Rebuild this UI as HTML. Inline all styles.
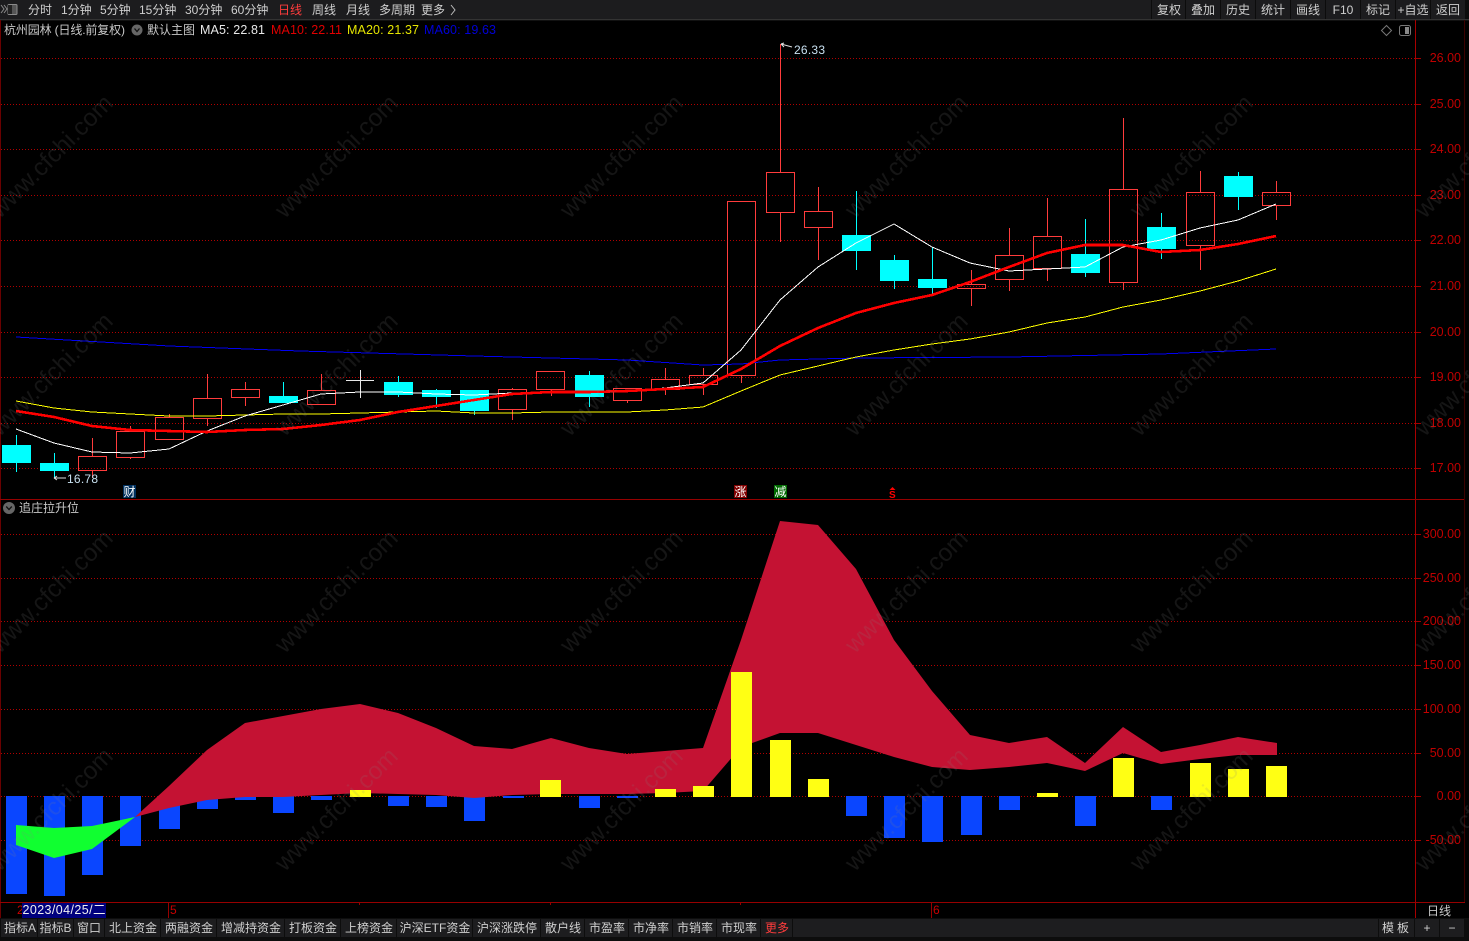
<!DOCTYPE html>
<html lang="zh"><head><meta charset="utf-8"><title>杭州园林</title>
<style>
html,body{margin:0;padding:0;background:#000;width:1469px;height:941px;overflow:hidden}
svg{display:block;position:absolute;left:0;top:0;font-family:"Liberation Sans","Noto Sans CJK SC",sans-serif;font-size:12px}
.c{shape-rendering:crispEdges}
.tb{fill:#cfcfcf}
.ax{fill:#c00000;font-size:12.5px;text-anchor:end}
.wm{font-size:24.5px;fill:#808080;fill-opacity:.16;text-anchor:middle}
.m{text-anchor:middle}
</style></head><body>
<svg width="1469" height="941" viewBox="0 0 1469 941">
<rect width="1469" height="941" fill="#000"/>
<!-- top bar -->
<rect width="1469" height="19" fill="#1c1c1e"/>
<rect y="19" width="1469" height="1" fill="#333"/>
<rect y="20" width="1469" height="1" fill="#111"/>
<g fill="#0c0c0c" class="c"><rect x="1151" width="1" height="19"/><rect x="1185" width="1" height="19"/><rect x="1220" width="1" height="19"/><rect x="1255" width="1" height="19"/><rect x="1290" width="1" height="19"/><rect x="1325" width="1" height="19"/><rect x="1360" width="1" height="19"/><rect x="1395" width="1" height="19"/><rect x="1430" width="1" height="19"/><rect x="1465" width="4" height="19"/></g>
<path d="M1 5l3 4-3 4M4 5l3 4-3 4" fill="none" stroke="#8a8a8a"/>
<rect x="8" y="4.500" width="9" height="10" rx="1" fill="#555" stroke="#8a8a8a"/>
<rect x="8" y="5" width="4" height="9" fill="#222"/>
<g class="tb">
<text x="28" y="14">分时</text><text x="61" y="14">1分钟</text><text x="100" y="14">5分钟</text><text x="139" y="14">15分钟</text><text x="185" y="14">30分钟</text><text x="231" y="14">60分钟</text><text x="278" y="14" fill="#ff3c3c">日线</text><text x="312" y="14">周线</text><text x="346" y="14">月线</text><text x="379" y="14">多周期</text><text x="421" y="14">更多</text>
</g>
<path d="M451 5l4 5-4 5" fill="none" stroke="#bbb"/>
<g class="tb m">
<text x="1169" y="14">复权</text><text x="1203" y="14">叠加</text><text x="1238" y="14">历史</text><text x="1273" y="14">统计</text><text x="1308" y="14">画线</text><text x="1343" y="14">F10</text><text x="1378" y="14">标记</text><text x="1413" y="14">+自选</text><text x="1448" y="14">返回</text>
</g>
<!-- legend -->
<text x="4" y="34" fill="#c8c8c8" textLength="121" lengthAdjust="spacing">杭州园林 (日线.前复权)</text>
<circle cx="137" cy="30" r="5.500" fill="#666"/><path d="M134.500 28.500l2.500 3 2.500-3" fill="none" stroke="#111" stroke-width="1.300"/>
<text x="147" y="34" fill="#c8c8c8">默认主图</text>
<text x="200" y="34" fill="#e8e8e8" font-size="12.500" textLength="65" lengthAdjust="spacing">MA5: 22.81</text>
<text x="271" y="34" fill="#e00000" font-size="12.500" textLength="71" lengthAdjust="spacing">MA10: 22.11</text>
<text x="347" y="34" fill="#e6e600" font-size="12.500" textLength="72" lengthAdjust="spacing">MA20: 21.37</text>
<text x="424" y="34" fill="#0000d8" font-size="12.500" textLength="72" lengthAdjust="spacing">MA60: 19.63</text>
<path d="M1386.500 25.500l5 5-5 5-5-5z" fill="none" stroke="#777"/>
<rect x="1399.500" y="25.500" width="11" height="10" rx="2" fill="none" stroke="#777"/><rect x="1405" y="27" width="4" height="7" fill="#888"/>
<!-- frame -->
<g class="c" fill="#960000">
<rect x="0" y="20" width="1" height="898" fill="#6a0000"/>
<rect x="1415" y="20" width="1" height="898" fill="#a80000"/>
<rect x="0" y="499" width="1465" height="1"/>
<rect x="0" y="902" width="1465" height="1"/>
<rect x="1464" y="20" width="1" height="882" fill="#3a0000"/>
<rect x="359" y="902" width="1" height="3"/><rect x="550" y="902" width="1" height="3"/><rect x="740" y="902" width="1" height="3"/>
<rect x="168" y="903" width="1" height="15"/><rect x="931" y="903" width="1" height="15"/>
</g>
<!-- grid -->
<g stroke="#b00000" stroke-dasharray="1 2" class="c" fill="none">
<path d="M1 58.500H1415M1 104.500H1415M1 149.500H1415M1 195.500H1415M1 240.500H1415M1 286.500H1415M1 332.500H1415M1 377.500H1415M1 423.500H1415M1 468.500H1415"/>
<path d="M1 534.500H1415M1 578.500H1415M1 621.500H1415M1 665.500H1415M1 709.500H1415M1 753.500H1415M1 796.500H1415M1 840.500H1415"/>
</g>
<path class="c" stroke="#a00000" fill="none" d="M1416 58.500h5M1416 104.500h5M1416 149.500h5M1416 195.500h5M1416 240.500h5M1416 286.500h5M1416 332.500h5M1416 377.500h5M1416 423.500h5M1416 468.500h5M1416 534.500h5M1416 578.500h5M1416 621.500h5M1416 665.500h5M1416 709.500h5M1416 753.500h5M1416 796.500h5M1416 840.500h5"/>
<g class="ax">
<text x="1461" y="62">26.00</text><text x="1461" y="108">25.00</text><text x="1461" y="153">24.00</text><text x="1461" y="199">23.00</text><text x="1461" y="244">22.00</text><text x="1461" y="290">21.00</text><text x="1461" y="336">20.00</text><text x="1461" y="381">19.00</text><text x="1461" y="427">18.00</text><text x="1461" y="472">17.00</text>
<text x="1461" y="538">300.00</text><text x="1461" y="582">250.00</text><text x="1461" y="625">200.00</text><text x="1461" y="669">150.00</text><text x="1461" y="713">100.00</text><text x="1461" y="757">50.00</text><text x="1461" y="800">0.00</text><text x="1461" y="844">-50.00</text>
</g>
<!-- hollow red candles -->
<path class="c" fill="none" stroke="#ff3c3c" d="
M92.500 438V456M92.500 470V478M78.500 456.500H106.500V470.500H78.500Z
M130.500 426V431M130.500 457V459M116.500 431.500H144.500V457.500H116.500Z
M169.500 414V417M155.500 417.500H183.500V439.500H155.500Z
M207.500 374V398M207.500 419V426M193.500 398.500H221.500V418.500H193.500Z
M245.500 382V389M245.500 398V406M231.500 389.500H259.500V397.500H231.500Z
M321.500 374V390M307.500 390.500H335.500V404.500H307.500Z
M512.500 388V389M512.500 409V420M498.500 389.500H526.500V409.500H498.500Z
M551.500 389V396M536.500 371.500H564.500V389.500H536.500Z
M627.500 400V403M613.500 388.500H641.500V400.500H613.500Z
M665.500 368V379M665.500 389V395M651.500 379.500H679.500V389.500H651.500Z
M703.500 368V375M703.500 384V395M689.500 375.500H717.500V384.500H689.500Z
M741.500 375V383M727.500 201.500H755.500V375.500H727.500Z
M780.500 44V172M780.500 212V242M766.500 172.500H794.500V212.500H766.500Z
M818.500 187V211M818.500 227V260M804.500 211.500H832.500V227.500H804.500Z
M971.500 270V284M971.500 288V306M957.500 284.500H985.500V288.500H957.500Z
M1009.500 228V255M1009.500 279V291M995.500 255.500H1023.500V279.500H995.500Z
M1047.500 198V236M1047.500 268V281M1033.500 236.500H1061.500V268.500H1033.500Z
M1123.500 118V189M1123.500 282V290M1109.500 189.500H1137.500V282.500H1109.500Z
M1200.500 171V192M1200.500 245V270M1186.500 192.500H1214.500V245.500H1186.500Z
M1276.500 181V192M1276.500 205V220M1262.500 192.500H1290.500V205.500H1262.500Z"/>
<!-- cyan candles -->
<path class="c" fill="none" stroke="#00ffff" d="M16.500 435V472M54.500 453V478M283.500 382V403M398.500 376V397M436.500 389V408M474.500 390V415M589.500 371V407M856.500 191V270M894.500 255V289M932.500 247V295M1085.500 219V277M1161.500 213V259M1238.500 172V210"/>
<g class="c" fill="#00ffff">
<rect x="2" y="445" width="29" height="18"/><rect x="40" y="463" width="29" height="8"/><rect x="269" y="396" width="29" height="7"/><rect x="384" y="382" width="29" height="13"/><rect x="422" y="390" width="29" height="7"/><rect x="460" y="390" width="29" height="21"/><rect x="575" y="375" width="29" height="22"/><rect x="842" y="235" width="29" height="16"/><rect x="880" y="260" width="29" height="21"/><rect x="918" y="279" width="29" height="9"/><rect x="1071" y="254" width="29" height="19"/><rect x="1147" y="227" width="29" height="22"/><rect x="1224" y="176" width="29" height="21"/>
</g>
<path class="c" stroke="#e8e8e8" d="M346 380.500H374M360.500 370V398" fill="none"/>
<!-- MAs -->
<polyline class="c" fill="none" stroke="#0000f0" stroke-width="1" points="16,337 169,346 300,351 474,356 627,360 703,365 741,364 780,360 856,358 1009,357 1161,354 1276,349"/>
<polyline class="c" fill="none" stroke="#ffff00" stroke-width="1" points="16,401 54,408 92,412 130,414 169,416 207,416 245,415 283,414 321,414 360,413 398,412 436,411 474,413 512,413 551,412 589,412 627,412 665,410 703,407 741,391 780,375 818,366 856,357 894,350 932,344 970,339 1009,332 1047,323 1085,317 1123,307 1161,300 1200,291 1238,281 1276,269"/>
<polyline class="c" fill="none" stroke="#ffffff" stroke-width="1" points="16,429 54,443 92,452 130,453 169,449 207,431 245,416 283,405 321,394 360,392 398,392 436,394 474,395 512,393 551,392 589,392 627,391 665,388 703,383 741,350 780,300 818,267 856,243 894,224 932,247 970,263 1009,271 1047,269 1085,267 1123,247 1161,240 1200,228 1238,220 1276,204"/>
<polyline class="c" fill="none" stroke="#ff0000" stroke-width="2.600" points="16,411 54,417 92,426 130,430 169,431 207,432 245,430 283,429 321,425 360,420 398,412 436,406 474,400 512,394 551,392 589,392 627,391 665,389 703,387 741,369 780,346 818,328 856,313 894,303 932,295 970,282 1009,267 1047,253 1085,245 1123,245 1161,252 1200,250 1238,244 1276,236"/>
<!-- price labels -->
<path d="M781 44l11 3M781 44l3-1M781 44l3 3" stroke="#ddd" fill="none"/>
<text x="794" y="54" fill="#c8e0f0" textLength="31" lengthAdjust="spacing">26.33</text>
<path d="M54 478h12M54 478l3-2M54 478l3 2" stroke="#ddd" fill="none"/>
<text x="67" y="483" fill="#c8e0f0" textLength="31" lengthAdjust="spacing">16.78</text>
<!-- markers -->
<rect x="123" y="485" width="13" height="13" fill="#00305e"/><text x="123.500" y="496" fill="#fff">财</text>
<rect x="734" y="485" width="13" height="13" fill="#800000"/><text x="734.500" y="496" fill="#fff">涨</text>
<rect x="774" y="485" width="13" height="13" fill="#006a00"/><text x="774.500" y="496" fill="#fff">减</text>
<path d="M892.500 487l-3 3h6z" fill="#f00"/><text x="889" y="498" fill="#f00" font-size="10" font-weight="bold">S</text>
<!-- sub panel title -->
<circle cx="9" cy="508" r="6" fill="#666"/><path d="M6.200 506.500l2.800 3 2.800-3" fill="none" stroke="#111" stroke-width="1.300"/>
<text x="19" y="512" fill="#c8c8c8">追庄拉升位</text>
<!-- blue bars -->
<g class="c" fill="#0a46ff">
<rect x="6" y="796" width="21" height="98"/><rect x="44" y="796" width="21" height="100"/><rect x="82" y="796" width="21" height="79"/><rect x="120" y="796" width="21" height="50"/><rect x="159" y="796" width="21" height="33"/><rect x="197" y="796" width="21" height="13"/><rect x="235" y="796" width="21" height="4"/><rect x="273" y="796" width="21" height="17"/><rect x="311" y="796" width="21" height="4"/><rect x="388" y="796" width="21" height="10"/><rect x="426" y="796" width="21" height="11"/><rect x="464" y="796" width="21" height="25"/><rect x="503" y="796" width="21" height="2"/><rect x="579" y="796" width="21" height="12"/><rect x="617" y="796" width="21" height="2"/><rect x="846" y="796" width="21" height="20"/><rect x="884" y="796" width="21" height="42"/><rect x="922" y="796" width="21" height="46"/><rect x="961" y="796" width="21" height="39"/><rect x="999" y="796" width="21" height="14"/><rect x="1075" y="796" width="21" height="30"/><rect x="1151" y="796" width="21" height="14"/>
</g>
<!-- area -->
<polygon fill="#c41233" points="135,817 169,786 207,750 245,723 283,716 321,709 360,704 398,713 436,728 474,746 512,749 551,738 589,748 627,754 665,751 703,748 741,640 780,521 818,525 856,569 894,640 932,691 970,735 1009,743 1047,737 1085,763 1123,727 1161,752 1200,745 1238,737 1277,743 1277,755 1238,755 1200,759 1161,764 1123,753 1085,771 1047,763 1009,767 970,770 932,767 894,757 856,745 818,733 780,733 741,747 703,791 665,793 627,794 589,794 551,794 512,795 474,798 436,795 398,794 360,793 321,795 283,797 245,797 207,800 169,808"/>
<polygon fill="#10ff30" points="16,825 54,828 92,826 135,817 92,849 54,858 16,845"/>
<!-- yellow bars -->
<g class="c" fill="#ffff14">
<rect x="350" y="790" width="21" height="7"/><rect x="540" y="780" width="21" height="17"/><rect x="655" y="789" width="21" height="8"/><rect x="693" y="786" width="21" height="11"/><rect x="731" y="672" width="21" height="125"/><rect x="770" y="740" width="21" height="57"/><rect x="808" y="779" width="21" height="18"/><rect x="1037" y="793" width="21" height="4"/><rect x="1113" y="758" width="21" height="39"/><rect x="1190" y="763" width="21" height="34"/><rect x="1228" y="769" width="21" height="28"/><rect x="1266" y="766" width="21" height="31"/>
</g>
<!-- watermark -->
<g class="wm">
<text transform="translate(57 162) rotate(-45)">www.cfchi.com</text><text transform="translate(342 162) rotate(-45)">www.cfchi.com</text><text transform="translate(627 162) rotate(-45)">www.cfchi.com</text><text transform="translate(912 162) rotate(-45)">www.cfchi.com</text><text transform="translate(1197 162) rotate(-45)">www.cfchi.com</text><text transform="translate(1482 162) rotate(-45)">www.cfchi.com</text>
<text transform="translate(57 380) rotate(-45)">www.cfchi.com</text><text transform="translate(342 380) rotate(-45)">www.cfchi.com</text><text transform="translate(627 380) rotate(-45)">www.cfchi.com</text><text transform="translate(912 380) rotate(-45)">www.cfchi.com</text><text transform="translate(1197 380) rotate(-45)">www.cfchi.com</text><text transform="translate(1482 380) rotate(-45)">www.cfchi.com</text>
<text transform="translate(57 597) rotate(-45)">www.cfchi.com</text><text transform="translate(342 597) rotate(-45)">www.cfchi.com</text><text transform="translate(627 597) rotate(-45)">www.cfchi.com</text><text transform="translate(912 597) rotate(-45)">www.cfchi.com</text><text transform="translate(1197 597) rotate(-45)">www.cfchi.com</text><text transform="translate(1482 597) rotate(-45)">www.cfchi.com</text>
<text transform="translate(57 815) rotate(-45)">www.cfchi.com</text><text transform="translate(342 815) rotate(-45)">www.cfchi.com</text><text transform="translate(627 815) rotate(-45)">www.cfchi.com</text><text transform="translate(912 815) rotate(-45)">www.cfchi.com</text><text transform="translate(1197 815) rotate(-45)">www.cfchi.com</text><text transform="translate(1482 815) rotate(-45)">www.cfchi.com</text>
</g>
<!-- date axis -->
<text x="17" y="914" fill="#c80000">2</text>
<rect x="22" y="903" width="84" height="15" fill="#00007e"/>
<text x="22.500" y="914" fill="#f0f0f0" font-size="12.500" textLength="83" lengthAdjust="spacing">2023/04/25/二</text>
<text x="170" y="914" fill="#c80000">5</text>
<text x="933" y="914" fill="#c80000">6</text>
<text x="1439" y="915" fill="#c8c8c8" class="m">日线</text>
<!-- bottom tabs -->
<rect y="918" width="1469" height="23" fill="#0d0d0d"/>
<rect x="1" y="919" width="1463" height="18" fill="#1d1d1f"/>
<g class="c" fill="#0d0d0d">
<rect x="37" y="919" width="1" height="18"/><rect x="73" y="919" width="1" height="18"/><rect x="104" y="919" width="1" height="18"/><rect x="160" y="919" width="1" height="18"/><rect x="216" y="919" width="1" height="18"/><rect x="284" y="919" width="1" height="18"/><rect x="340" y="919" width="1" height="18"/><rect x="396" y="919" width="1" height="18"/><rect x="472" y="919" width="1" height="18"/><rect x="540" y="919" width="1" height="18"/><rect x="584" y="919" width="1" height="18"/><rect x="628" y="919" width="1" height="18"/><rect x="672" y="919" width="1" height="18"/><rect x="716" y="919" width="1" height="18"/><rect x="760" y="919" width="1" height="18"/><rect x="792" y="919" width="1" height="18"/><rect x="1378" y="919" width="1" height="18"/><rect x="1414" y="919" width="1" height="18"/><rect x="1439" y="919" width="1" height="18"/>
</g>
<g class="tb m">
<text x="20" y="932">指标A</text><text x="55.500" y="932">指标B</text><text x="89" y="932">窗口</text><text x="133" y="932">北上资金</text><text x="189" y="932">两融资金</text><text x="251" y="932">增减持资金</text><text x="313" y="932">打板资金</text><text x="369" y="932">上榜资金</text><text x="435" y="932">沪深ETF资金</text><text x="507" y="932">沪深涨跌停</text><text x="563" y="932">散户线</text><text x="607" y="932">市盈率</text><text x="651" y="932">市净率</text><text x="695" y="932">市销率</text><text x="739" y="932">市现率</text><text x="777" y="932" fill="#ff3c3c">更多</text>
<text x="1397" y="932" letter-spacing="3">模板</text><text x="1427" y="932">+</text><text x="1452" y="932">−</text>
</g>
</svg>
</body></html>
